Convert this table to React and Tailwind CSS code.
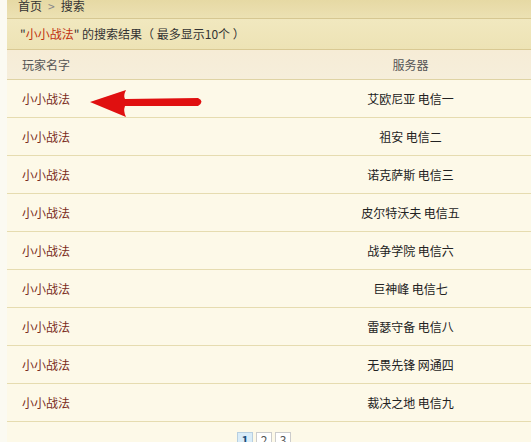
import React from 'react';

const rows = [
  '艾欧尼亚 电信一',
  '祖安 电信二',
  '诺克萨斯 电信三',
  '皮尔特沃夫 电信五',
  '战争学院 电信六',
  '巨神峰 电信七',
  '雷瑟守备 电信八',
  '无畏先锋 网通四',
  '裁决之地 电信九',
];

const font = { fontFamily: '"Noto Sans CJK SC", "DejaVu Sans", sans-serif' };

// hand-drawn red pointer next to the first result
function Arrow() {
  return (
    <svg className="absolute left-[88px] top-[89px]" width="118" height="30" viewBox="0 0 118 30">
      <path d="M2 13 L38 1 Q35 7 37 10 L110 9 Q117 12.5 110 17 L37 17 Q35 22 38 28 Z" fill="#e01010" />
    </svg>
  );
}

export default function App() {
  return (
    <div className="relative w-[531px] h-[442px] overflow-hidden bg-[#fbfaf2] text-[12px] leading-none" style={font}>
      <div className="ml-[7px] flex flex-col bg-[#fdf9e8]">
        {/* breadcrumb */}
        <div className="h-[19px] flex items-center pl-[11px] text-[#333] bg-gradient-to-b from-[#e6d9a4] to-[#ece1b3] border-b border-[#d6c792]">
          <span className="-mt-[6px]">首页</span>
          <span className="-mt-[6px] mx-[6px] text-[#888]">&gt;</span>
          <span className="-mt-[6px]">搜索</span>
        </div>
        {/* title */}
        <div className="h-[31px] flex items-center pl-[13px] text-[#333] bg-gradient-to-b from-[#f1e8bf] to-[#ede3b5] border-b border-[#d9c993]">
          <span>"</span>
          <span className="text-[#c0300f]">小小战法</span>
          <span className="whitespace-pre">" 的搜索结果（ 最多显示10个 ）</span>
        </div>
        {/* header */}
        <div className="h-[30px] flex items-center text-[#555] bg-gradient-to-b from-[#f6ecd6] to-[#f6eedb] border-b border-[#dfd3a4]">
          <div className="w-[283px] pl-[15px]">玩家名字</div>
          <div className="flex-1 text-center">服务器</div>
        </div>
        {rows.map((s) => (
          <div key={s} className="h-[38px] flex items-center border-b border-[#e6dcb0] bg-[#fdf9e8]">
            <div className="w-[283px] pl-[15px] text-[#7a2c1c]">小小战法</div>
            <div className="flex-1 text-center text-[#222]">{s}</div>
          </div>
        ))}
        <div className="h-[30px] flex justify-center items-start pt-[10px] gap-[3px] pr-[10px]">
          <span className="w-[16px] h-[16px] flex items-center justify-center border border-[#b8cfe0] bg-[#d9ecf8] text-[#1a4f7a] font-bold">1</span>
          <span className="w-[16px] h-[16px] flex items-center justify-center border border-[#ccc] bg-white text-[#555]">2</span>
          <span className="w-[16px] h-[16px] flex items-center justify-center border border-[#ccc] bg-white text-[#555]">3</span>
        </div>
      </div>
      <Arrow />
    </div>
  );
}
